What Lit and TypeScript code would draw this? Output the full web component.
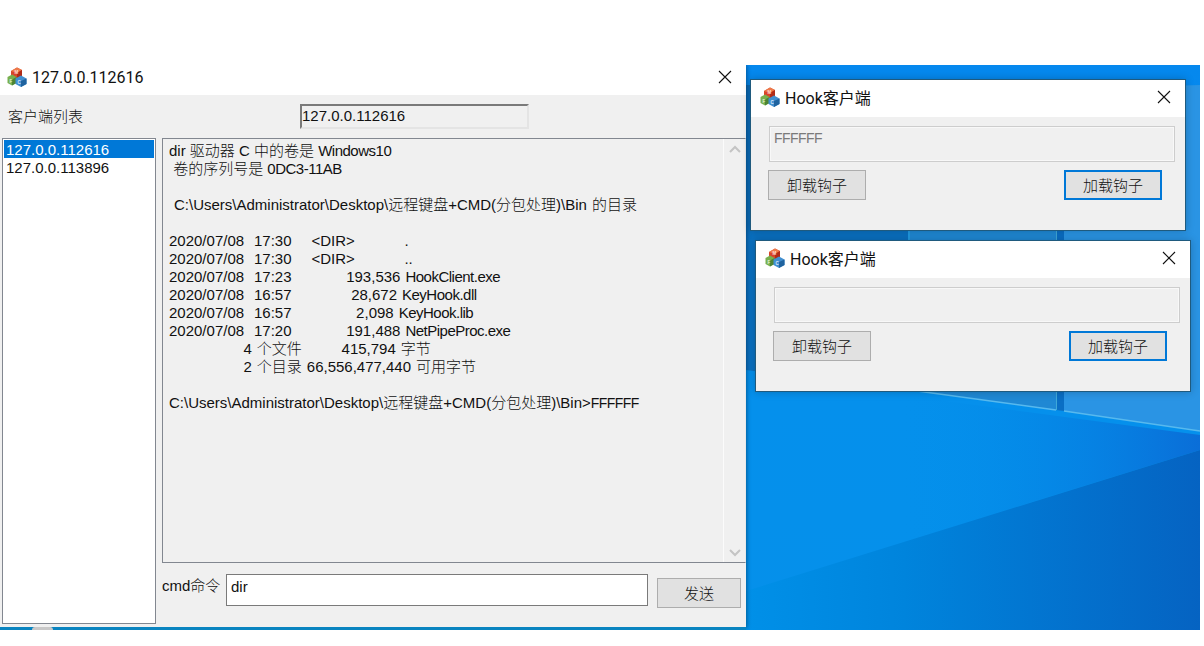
import { LitElement, html, css, svg } from "lit";
import { customElement, property } from "lit/decorators.js";

const cubes = html`<svg class="cubes" viewBox="0 0 20 20" width="20" height="20">
  ${svg`
    <path d="M4 4l6-3.500 5 2.500v7l-5 3-6-3z" fill="#d8452a"/>
    <path d="M4 4l6-3.500 5 2.500-5 3z" fill="#ee7a4a"/>
    <path d="M10 6l5-3v7l-5 3z" fill="#b02c18"/>
    <path d="M0.500 10l4.500-2.500 4.500 2.500v6l-4.500 2.500-4.500-2.500z" fill="#78b04e"/>
    <path d="M5 12.500l4.500-2.500v6l-4.500 2.500z" fill="#4c8434"/>
    <path d="M8.500 11.500l5.500-3 5.500 3v5.500l-5.500 3-5.500-3z" fill="#418fd0"/>
    <path d="M14 14l5.500-2.500v5.500l-5.500 3z" fill="#1f639f"/>
    <text x="7.500" y="6.800" font-size="4.500" font-family="Liberation Sans" font-weight="700" fill="#ffd9d0">M</text>
    <text x="2.500" y="15.500" font-size="4.500" font-family="Liberation Sans" font-weight="700" fill="#e8f5dc">F</text>
    <text x="10.500" y="17" font-size="4.500" font-family="Liberation Sans" font-weight="700" fill="#dcecfa">C</text>
  `}
</svg>`;

const closeX = html`<svg class="close" viewBox="0 0 14 14" width="14" height="14">
  ${svg`<path d="M1 1l12 12M13 1L1 13" stroke="#111" stroke-width="1.100" fill="none"/>`}
</svg>`;

const sharedStyles = css`
  .title {
    display: flex;
    align-items: center;
    background: #fff;
    font-family: Roboto, "Noto Sans CJK SC", sans-serif;
    font-size: 16px;
    font-weight: 400;
    color: #111;
  }
  .cubes {
    flex: none;
  }
  .close {
    margin-left: auto;
    flex: none;
  }
  .btn {
    box-sizing: border-box;
    display: flex;
    align-items: center;
    justify-content: center;
    background: #e1e1e1;
    border: 1px solid #adadad;
    color: #111;
    font-size: 15px;
    padding-bottom: 2px;
  }
  .btn.focus {
    border: 2px solid #0078d7;
  }
  .t {
    letter-spacing: -0.5px;
  }
  .f {
    font-size: 14px;
    letter-spacing: -0.55px;
  }
  .w {
    word-spacing: 0;
  }
`;

@customElement("hook-window")
export class HookWindow extends LitElement {
  @property() value = "";

  static styles = [
    sharedStyles,
    css`
      :host {
        display: block;
      }
      .win {
        box-sizing: border-box;
        width: 436px;
        height: 152px;
        border: 1px solid #1f5a7e;
        background: #f0f0f0;
        font-family: "Liberation Sans", "Noto Sans CJK SC", sans-serif;
        font-weight: 300;
        box-shadow: 0 0 8px rgba(0, 0, 0, 0.22);
      }
      .title {
        box-sizing: border-box;
        height: 37px;
        padding: 0 14px 4px 9px;
        gap: 5px;
      }
      .body {
        padding: 9px 10px 0 18px;
      }
      .edit {
        box-sizing: border-box;
        height: 36px;
        margin-bottom: 8px;
        padding: 2px 4px;
        border: 1px solid #cdcdcd;
        outline: 1px solid #f8f8f8;
        outline-offset: -2px;
        color: #7a7a7a;
        font-size: 15px;
        line-height: 18px;
      }
      .actions {
        display: flex;
        justify-content: space-between;
        margin-left: -1px;
        padding-right: 13px;
      }
      .btn {
        width: 98px;
        height: 30px;
      }
    `,
  ];

  render() {
    return html`<div class="win">
      <div class="title">${cubes}<span>Hook客户端</span>${closeX}</div>
      <div class="body">
        <div class="edit"><span class="f">${this.value}</span></div>
        <div class="actions">
          <div class="btn">卸载钩子</div>
          <div class="btn focus">加载钩子</div>
        </div>
      </div>
    </div>`;
  }
}

// the listing is kept as console text, spaces and all
const consoleLines = [
  html`<span class="w">dir 驱动器 C 中的卷是 <span class="t">Windows10</span></span>`,
  html`<span class="w"> 卷的序列号是 <span class="t">0DC3-11AB</span></span>`,
  "",
  " C:\\Users\\Administrator\\Desktop\\远程键盘+CMD(分包处理)\\Bin 的目录",
  "",
  "2020/07/08  17:30    <DIR>          .",
  "2020/07/08  17:30    <DIR>          ..",
  html`2020/07/08  17:23           193,536 <span class="t">HookClient.exe</span>`,
  html`2020/07/08  16:57            28,672 <span class="t">KeyHook.dll</span>`,
  html`2020/07/08  16:57             2,098 <span class="t">KeyHook.lib</span>`,
  html`2020/07/08  17:20           191,488 <span class="t">NetPipeProc.exe</span>`,
  "               4 个文件        415,794 字节",
  "               2 个目录 66,556,477,440 可用字节",
  "",
  html`C:\\Users\\Administrator\\Desktop\\远程键盘+CMD(分包处理)\\Bin><span class="f">FFFFFF</span>`,
];

@customElement("main-window")
export class MainWindow extends LitElement {
  static styles = [
    sharedStyles,
    css`
      :host {
        display: block;
      }
      .win {
        display: flex;
        flex-direction: column;
        width: 746px;
        height: 562px;
        background: #f0f0f0;
        font-family: "Liberation Sans", "Noto Sans CJK SC", sans-serif;
        font-weight: 300;
        font-size: 15px;
        color: #111;
        border-bottom: 1px solid #20506e;
        box-shadow: 1px 0 4px rgba(0, 0, 0, 0.35);
      }
      .title {
        box-sizing: border-box;
        height: 30px;
        padding: 0 14px 6px 7px;
        gap: 5px;
      }
      .top {
        display: flex;
        align-items: center;
        height: 25px;
        margin: 9px 0;
        padding-left: 8px;
      }
      .top span {
        padding-bottom: 3px;
      }
      .top .host {
        box-sizing: border-box;
        width: 229px;
        height: 25px;
        margin-left: 217px;
        line-height: 20px;
        border: 2px solid;
        border-color: #7a7a7a #e4e4e4 #e4e4e4 #7a7a7a;
        background: #f0f0f0;
      }
      .main {
        display: flex;
        gap: 6px;
        padding-left: 2px;
      }
      .list {
        box-sizing: border-box;
        width: 154px;
        height: 486px;
        padding: 1px;
        border: 1px solid #828790;
        background: #fff;
        line-height: 20px;
      }
      .item {
        padding-left: 2px;
        height: 18px;
      }
      .item.sel {
        background: #0078d7;
        color: #fff;
      }
      .right {
        flex: 1;
        min-width: 0;
      }
      .console {
        box-sizing: border-box;
        display: flex;
        height: 425px;
        border: 1px solid #828790;
        border-right-color: #e8e8e8;
      }
      .text {
        flex: 1;
        padding: 3px 6px;
        line-height: 18px;
        white-space: pre;
        word-spacing: 0.8px;
        overflow: hidden;
      }
      .line {
        min-height: 18px;
      }
      .scroll {
        display: flex;
        flex-direction: column;
        justify-content: space-between;
        align-items: center;
        box-sizing: border-box;
        width: 22px;
        padding: 6px 0 5px;
        border-left: 1px solid #fbfbfb;
      }
      .send-row {
        display: flex;
        align-items: flex-start;
        margin-top: 11px;
      }
      .send-row label {
        width: 64px;
        line-height: 24px;
      }
      .input {
        box-sizing: border-box;
        width: 422px;
        height: 32px;
        padding: 2px 4px;
        line-height: 20px;
        border: 1px solid #7a7a7a;
        background: #fff;
      }
      .btn {
        width: 84px;
        height: 30px;
        margin: 4px 0 0 9px;
      }
    `,
  ];

  render() {
    return html`<div class="win">
      <div class="title">${cubes}<span>127.0.0.112616</span>${closeX}</div>
      <div class="top">
        <span>客户端列表</span>
        <div class="host">127.0.0.112616</div>
      </div>
      <div class="main">
        <div class="list">
          <div class="item sel">127.0.0.112616</div>
          <div class="item">127.0.0.113896</div>
        </div>
        <div class="right">
          <div class="console">
            <div class="text">${consoleLines.map((l) => html`<div class="line">${l}</div>`)}</div>
            <div class="scroll">
              <svg viewBox="0 0 12 8" width="12" height="8">
                ${svg`<path d="M1 7l5-5 5 5" stroke="#c4c4c4" stroke-width="2" fill="none"/>`}
              </svg>
              <svg viewBox="0 0 12 8" width="12" height="8">
                ${svg`<path d="M1 1l5 5 5-5" stroke="#c4c4c4" stroke-width="2" fill="none"/>`}
              </svg>
            </div>
          </div>
          <div class="send-row">
            <label>cmd命令</label>
            <div class="input">dir</div>
            <div class="btn">发送</div>
          </div>
        </div>
      </div>
    </div>`;
  }
}

@customElement("app-root")
export class AppRoot extends LitElement {
  static styles = css`
    :host {
      display: block;
      height: 646px;
      background: #fff;
      overflow: hidden;
    }
    .desktop {
      position: relative;
      top: 65px;
      width: 1200px;
      height: 565px;
      overflow: hidden;
      background: linear-gradient(180deg, #0588ee 0%, #0590ec 60%, #0590ea 100%);
    }
    .wall {
      position: absolute;
      inset: 0;
    }
    main-window,
    hook-window {
      position: absolute;
    }
    main-window {
      left: 0;
      top: 0;
    }
    .hook-a {
      left: 750px;
      top: 14px;
    }
    .hook-b {
      left: 755px;
      top: 175px;
    }
    .strip {
      position: absolute;
      left: 0;
      top: 562px;
      width: 746px;
      height: 3px;
      background: #0a84c0;
    }
    .tab {
      position: absolute;
      left: 32px;
      top: 562px;
      width: 21px;
      height: 3px;
      background: #c8c8c8;
      border-radius: 3px 3px 0 0;
    }
  `;

  render() {
    return html`<div class="desktop">
      <svg class="wall" viewBox="0 0 1200 565" width="1200" height="565">
        ${svg`
          <defs>
            <linearGradient id="low" x1="746" y1="0" x2="1200" y2="0" gradientUnits="userSpaceOnUse">
              <stop offset="0" stop-color="#0090e8"/>
              <stop offset="0.35" stop-color="#0084dc"/>
              <stop offset="1" stop-color="#0563c2"/>
            </linearGradient>
            <linearGradient id="high" x1="900" y1="0" x2="1200" y2="0" gradientUnits="userSpaceOnUse">
              <stop offset="0" stop-color="#0090ea" stop-opacity="0"/>
              <stop offset="1" stop-color="#0a6ed8"/>
            </linearGradient>
          </defs>
          <path d="M900 330L1200 370V385L900 478z" fill="url(#high)"/>
          <path d="M746 526L1200 385V565H746z" fill="url(#low)"/>
          <path d="M746 20H908V325L746 305z" fill="#0a70c0"/>
          <path d="M1064 24L1200 20V366L1064 346z" fill="#2a94e4"/>
          <path d="M910 20H1056V345L910 325z" fill="#1f88d4"/>
          <path d="M1056 20H1064V346L1056 345z" fill="#0a6ec4"/>
          <path d="M910 325L1056 345M1064 346L1200 366" stroke="#57b9ee" stroke-width="1.500"/>
          <path d="M909 160V326M1056.500 160V345" stroke="#3fa8d8" stroke-width="1"/>
        `}
      </svg>
      <main-window></main-window>
      <div class="strip"></div>
      <div class="tab"></div>
      <hook-window class="hook-a" value="FFFFFF"></hook-window>
      <hook-window class="hook-b"></hook-window>
    </div>`;
  }
}
